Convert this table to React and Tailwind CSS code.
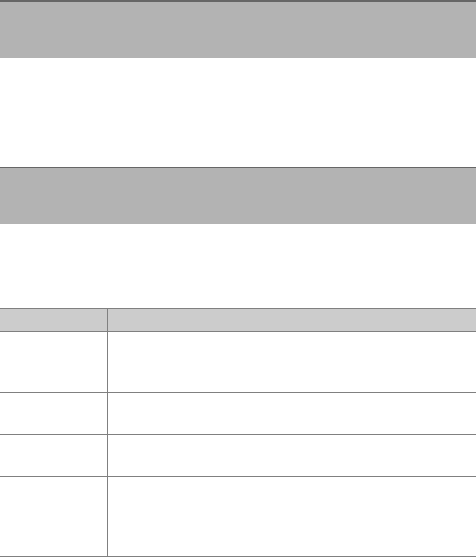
const rows = [
  { h: "h-[61px]" },
  { h: "h-[42px]" },
  { h: "h-[42px]" },
  { h: "h-[80px]" },
];

export default function App() {
  return (
    <div className="w-[476px] h-[557px] bg-white overflow-hidden font-['Liberation_Sans',sans-serif]">
      {/* section heading 1 */}
      <div className="h-[58px] border-t-2 border-[#666666] bg-[#b3b3b3]"></div>
      <div className="h-[109px]"></div>

      {/* section heading 2 */}
      <div className="h-[57px] border-t border-[#666666] bg-[#b3b3b3]"></div>
      <div className="h-[84px]"></div>

      {/* table */}
      <div className="border-t border-[#808080]">
        <div className="flex h-[23px] bg-[#cccccc] border-b border-[#808080]">
          <div className="w-[107px]"></div>
          <div className="flex-1 border-l border-[#808080]"></div>
        </div>
        {rows.map((r, i) => (
          <div key={i} className={`flex ${r.h} border-b border-[#808080]`}>
            <div className="w-[107px]"></div>
            <div className="flex-1 border-l border-[#808080]"></div>
          </div>
        ))}
      </div>
    </div>
  );
}
